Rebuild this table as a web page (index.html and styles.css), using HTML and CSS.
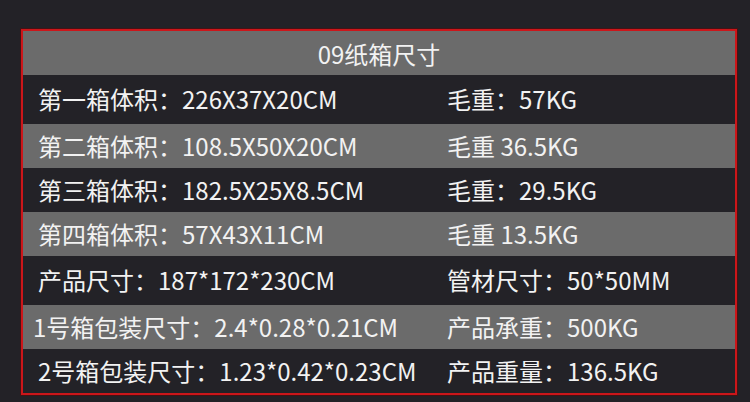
FILE: index.html
```html
<!DOCTYPE html>
<html lang="zh">
<head>
    <meta charset="UTF-8">
    <title>09纸箱尺寸</title>
    <link rel="stylesheet" href="styles.css">
</head>
<body>
    <div id="sizeTable">
        <div class="table-head">09纸箱尺寸</div>
        <div class="table-row dark tall">
            <span>第一箱体积：226X37X20CM</span>
            <span>毛重：57KG</span>
        </div>
        <div class="table-row gray">
            <span>第二箱体积：108.5X50X20CM</span>
            <span>毛重 36.5KG</span>
        </div>
        <div class="table-row dark">
            <span>第三箱体积：182.5X25X8.5CM</span>
            <span>毛重：29.5KG</span>
        </div>
        <div class="table-row gray">
            <span>第四箱体积：57X43X11CM</span>
            <span>毛重 13.5KG</span>
        </div>
        <div class="table-row dark tall">
            <span>产品尺寸：187*172*230CM</span>
            <span>管材尺寸：50*50MM</span>
        </div>
        <div class="table-row gray">
            <span class="shift-left">1号箱包装尺寸：2.4*0.28*0.21CM</span>
            <span>产品承重：500KG</span>
        </div>
        <div class="table-row dark">
            <span>2号箱包装尺寸：1.23*0.42*0.23CM</span>
            <span>产品重量：136.5KG</span>
        </div>
    </div>
</body>
</html>
```

FILE: styles.css
```css
/* Basic reset */
body,
html {
    margin: 0;
    padding: 0;
    height: 100%;
    overflow: hidden;
    background: #232227;
    font-family: "Noto Sans CJK SC", "Noto Sans", sans-serif;
    color: #f2f2f2;
}

body {
    padding: 29px 0 0 21px;
    box-sizing: border-box;
}

/* Outer red frame */
#sizeTable {
    width: 712px;
    border: 2px solid #cc161a;
    box-shadow: 0 0 0 1px rgba(90, 10, 10, 0.6);
}

.table-head {
    height: 44px;
    background: #6b6b6b;
    display: flex;
    align-items: center;
    justify-content: center;
    font-size: 24px;
}

.table-row {
    height: 44px;
    box-sizing: border-box;
    padding-bottom: 2px;
    display: grid;
    grid-template-columns: 409px 1fr;
    align-items: center;
    padding-left: 15px;
    font-size: 24px;
    white-space: nowrap;
}

.table-row.tall {
    height: 49px;
}

.table-row.dark {
    background: #232227;
}

.table-row.gray {
    background: #6b6b6b;
}

.shift-left {
    margin-left: -5px;
}
```
